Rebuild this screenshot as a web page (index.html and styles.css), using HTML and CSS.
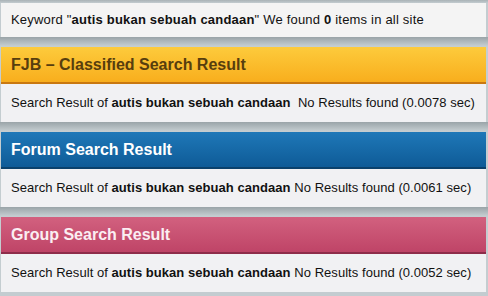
FILE: index.html
```html
<!DOCTYPE html>
<html lang="id">
<head>
    <meta charset="UTF-8">
    <title>Search Result</title>
    <link rel="stylesheet" href="styles.css">
</head>
<body>
    <div class="page">
        <div class="keyword">
            Keyword "<b>autis bukan sebuah candaan</b>" We found <b>0</b> items in all site
        </div>

        <div class="section fjb">
            <div class="section-head">FJB &ndash; Classified Search Result</div>
            <div class="section-body">Search Result of <b>autis bukan sebuah candaan</b>&nbsp; No Results found (0.0078 sec)</div>
        </div>

        <div class="section forum">
            <div class="section-head">Forum Search Result</div>
            <div class="section-body">Search Result of <b>autis bukan sebuah candaan</b> No Results found (0.0061 sec)</div>
        </div>

        <div class="section group">
            <div class="section-head">Group Search Result</div>
            <div class="section-body">Search Result of <b>autis bukan sebuah candaan</b> No Results found (0.0052 sec)</div>
        </div>
    </div>
</body>
</html>
```

FILE: styles.css
```css
* {
    margin: 0;
    padding: 0;
    box-sizing: border-box;
}

body {
    font-family: "Liberation Sans", Arial, sans-serif;
    font-size: 13px;
    color: #111;
    background: #c3ccd0;
}

.page {
    padding: 3px 2px 5px 1px;
    background: linear-gradient(to bottom, #a9b2b6, #c3ccd0 3px);
}

.keyword {
    height: 34px;
    line-height: 34px;
    padding-left: 10px;
    letter-spacing: 0.2px;
    background: #f4f4f4;
}

.section {
    padding-top: 10px;
    margin: 0 -2px 0 -1px;
    padding-left: 1px;
    padding-right: 2px;
    background: linear-gradient(to bottom, #9aa4a8, #c4cdd0 9px);
}

.section-head {
    height: 37px;
    line-height: 36px;
    padding-left: 10px;
    font-size: 16px;
    font-weight: bold;
    border-bottom: 2px solid;
}

.section-body {
    height: 38px;
    line-height: 37px;
    padding-left: 10px;
    letter-spacing: 0.05px;
    background: #f1f1f3;
}

.fjb .section-head {
    color: #573e0e;
    background: linear-gradient(to bottom, #fdcb3c, #f8ae1d);
    border-bottom-color: #c97810;
}

.forum .section-head {
    color: #fff;
    background: linear-gradient(to bottom, #1f78b8, #0e5b97);
    border-bottom-color: #0a416c;
}

.group .section-head {
    color: #fbeef2;
    background: linear-gradient(to bottom, #d2617f, #bf4467);
    border-bottom-color: #8e2d4a;
}
```
